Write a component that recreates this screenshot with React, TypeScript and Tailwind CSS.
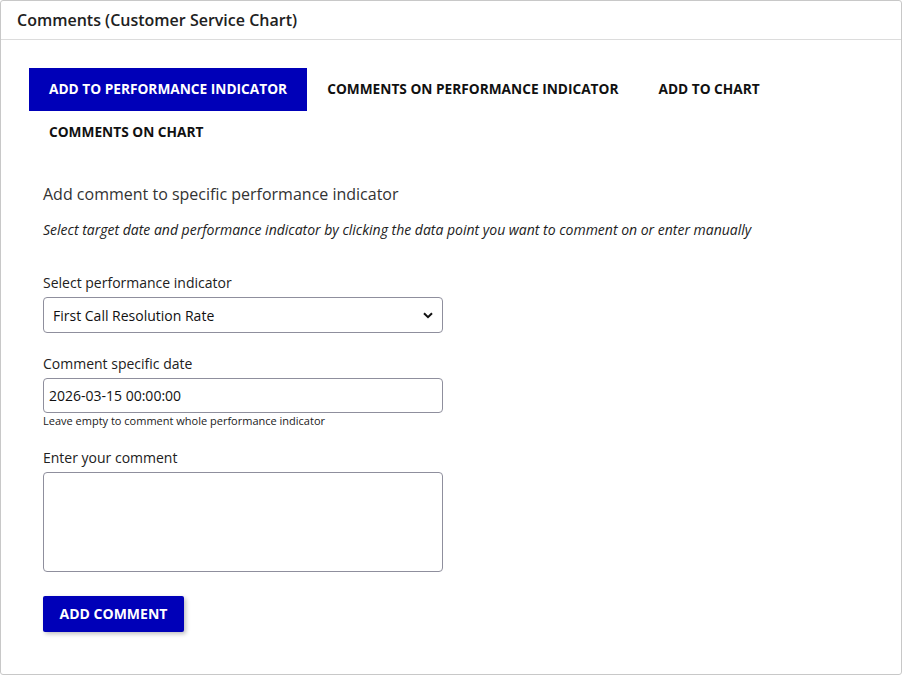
import React from "react";

const tabs = [
  "ADD TO PERFORMANCE INDICATOR",
  "COMMENTS ON PERFORMANCE INDICATOR",
  "ADD TO CHART",
  "COMMENTS ON CHART",
];

export default function App() {
  return (
    <div
      className="h-[675px] w-full bg-white text-[#212121] overflow-hidden"
      style={{ fontFamily: '"Open Sans", "Noto Sans", sans-serif' }}
    >
      <div className="h-full border border-[#c8c8c8] rounded-[3px] flex flex-col">
        {/* Header */}
        <div className="h-[39px] border-b border-[#dcdcdc] flex items-center px-4 shrink-0">
          <h1 className="text-[16px] font-semibold leading-6">
            Comments (Customer Service Chart)
          </h1>
        </div>

        <div className="px-7 pt-7">
          {/* Tabs */}
          <div className="flex flex-wrap">
            {tabs.map((t, i) => (
              <button
                key={t}
                className={
                  i === 0
                    ? "h-[43px] px-5 pb-[1px] bg-[#0000b8] text-white text-[13.7px] font-bold"
                    : "h-[43px] px-5 pb-[1px] text-[#111] text-[13.7px] font-bold"
                }
              >
                {t}
              </button>
            ))}
          </div>

          {/* Form */}
          <div className="px-[14px] pt-7">
            <h2 className="text-[16px] leading-6 text-[#333]">
              Add comment to specific performance indicator
            </h2>
            <p className="mt-[14px] text-[14px] leading-5 italic">
              Select target date and performance indicator by clicking the data point you want to comment on or enter manually
            </p>

            <label className="block mt-[33px] text-[14px] leading-5">
              Select performance indicator
            </label>
            <div className="relative mt-1 w-[400px]">
              <select className="block w-full h-[36px] appearance-none border border-[#8f8f9d] rounded-[4px] bg-white pl-[9px] pr-8 text-[14px] text-[#111]">
                <option>First Call Resolution Rate</option>
                <option>Average Handle Time</option>
                <option>Customer Satisfaction</option>
              </select>
              <svg
                className="pointer-events-none absolute right-[10px] top-[15px]"
                width="10"
                height="7"
                viewBox="0 0 10 7"
              >
                <path d="M1 1.2 5 5.2 9 1.2" fill="none" stroke="#111" strokeWidth="2" />
              </svg>
            </div>

            <label className="block mt-[21px] text-[14px] leading-5">
              Comment specific date
            </label>
            <input
              className="block mt-1 w-[400px] h-[35px] border border-[#8f8f9d] rounded-[4px] px-[5px] text-[14px] text-[#111]"
              defaultValue="2026-03-15 00:00:00"
            />
            <p className="text-[11px] leading-4 mt-0">
              Leave empty to comment whole performance indicator
            </p>

            <label className="block mt-[19px] text-[14px] leading-5">
              Enter your comment
            </label>
            <textarea className="block mt-1 w-[400px] h-[100px] border border-[#8f8f9d] rounded-[4px] resize-none p-1 text-[14px]" />

            <button className="mt-[24px] h-[36px] w-[141px] pb-[2px] bg-[#0000b8] text-white text-[14px] font-bold rounded-[2px] shadow-[2px_2px_4px_rgba(0,0,0,0.25)]">
              ADD COMMENT
            </button>
          </div>
        </div>
      </div>
    </div>
  );
}
